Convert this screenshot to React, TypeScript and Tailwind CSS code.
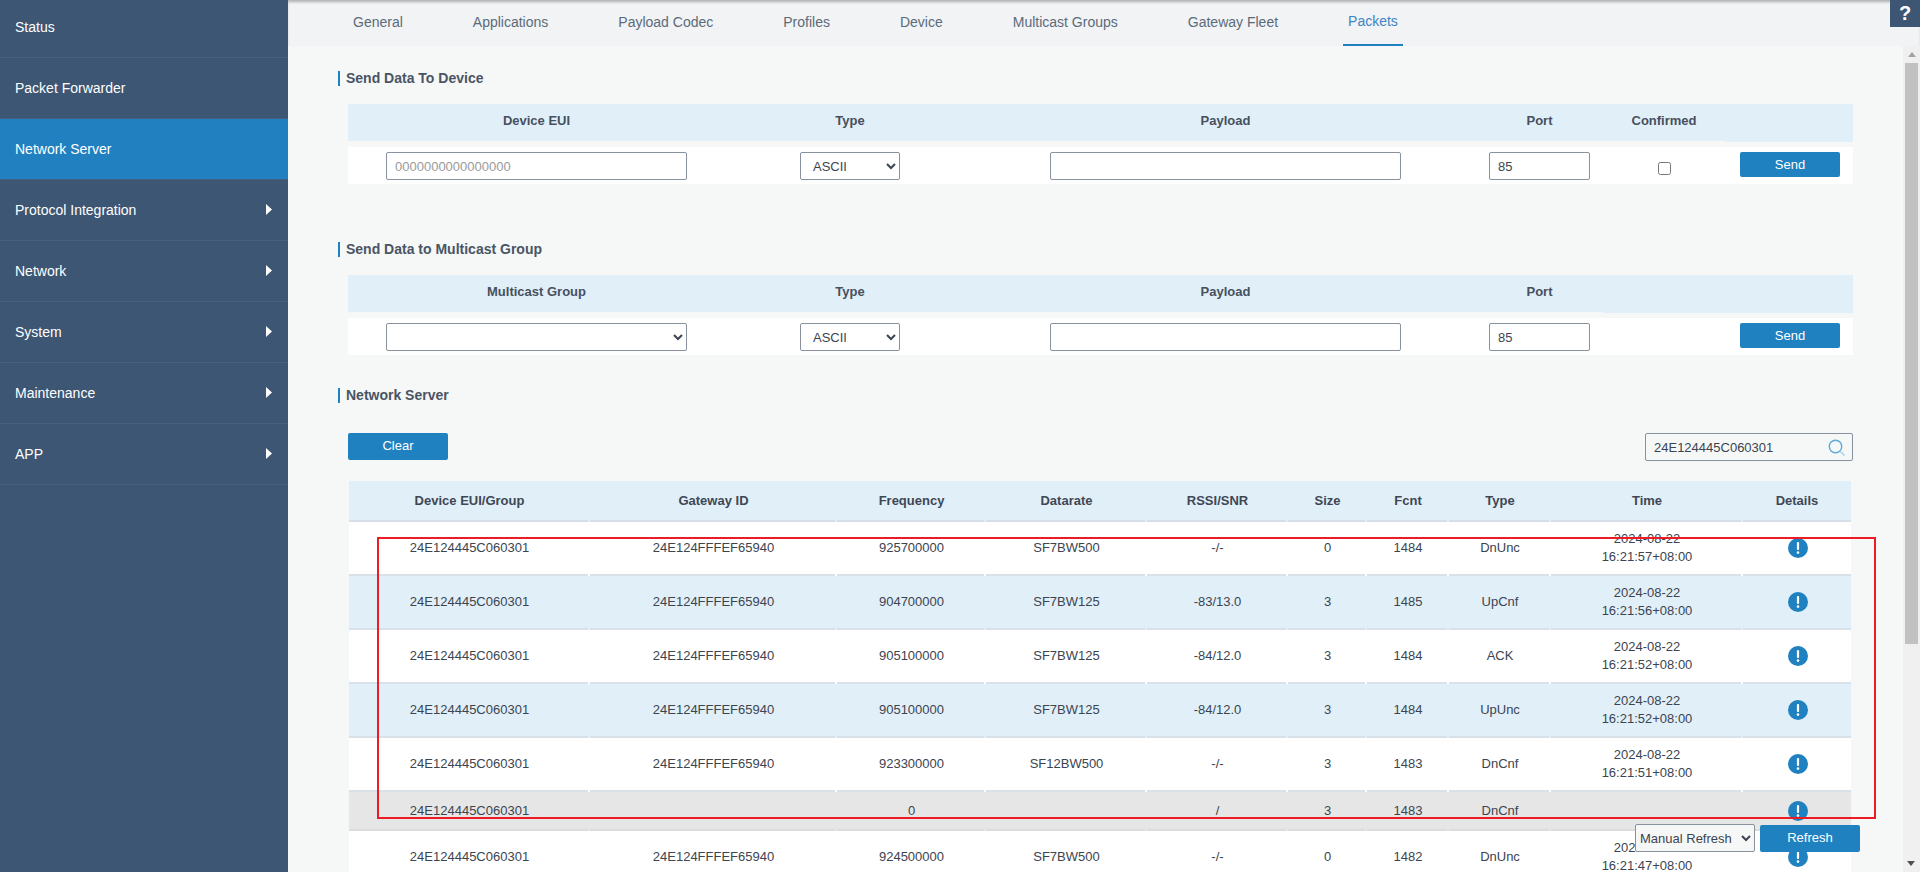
import React from "react";

const menu = [
  { label: "Packet Forwarder" },
  { label: "Network Server", active: true },
  { label: "Protocol Integration", arrow: true },
  { label: "Network", arrow: true },
  { label: "System", arrow: true },
  { label: "Maintenance", arrow: true },
  { label: "APP", arrow: true },
];

const tabs = ["General", "Applications", "Payload Codec", "Profiles", "Device", "Multicast Groups", "Gateway Fleet", "Packets"];

const heads = ["Device EUI/Group", "Gateway ID", "Frequency", "Datarate", "RSSI/SNR", "Size", "Fcnt", "Type", "Time", "Details"];

const EUI = "24E124445C060301";
const GW = "24E124FFFEF65940";

const rows = [
  { c: [EUI, GW, "925700000", "SF7BW500", "-/-", "0", "1484", "DnUnc"], t: "16:21:57+08:00", kind: "white" },
  { c: [EUI, GW, "904700000", "SF7BW125", "-83/13.0", "3", "1485", "UpCnf"], t: "16:21:56+08:00", kind: "blue" },
  { c: [EUI, GW, "905100000", "SF7BW125", "-84/12.0", "3", "1484", "ACK"], t: "16:21:52+08:00", kind: "white" },
  { c: [EUI, GW, "905100000", "SF7BW125", "-84/12.0", "3", "1484", "UpUnc"], t: "16:21:52+08:00", kind: "blue" },
  { c: [EUI, GW, "923300000", "SF12BW500", "-/-", "3", "1483", "DnCnf"], t: "16:21:51+08:00", kind: "white" },
  { c: [EUI, "", "0", "", "/", "3", "1483", "DnCnf"], t: "", kind: "gray" },
  { c: [EUI, GW, "924500000", "SF7BW500", "-/-", "0", "1482", "DnUnc"], t: "16:21:47+08:00", kind: "white" },
];

const dataCols = "grid grid-cols-[241px_247px_149px_161px_141px_79px_82px_102px_192px_108px]";
const formCols = "grid grid-cols-[377px_250px_501px_127px_122px_128px]";
const field = "h-[28px] border border-[#87929e] rounded-[2px] text-[13px] text-[#3c4450] outline-none";

function Title({ children }: { children: React.ReactNode }) {
  return (
    <div className="h-[15px] border-l-2 border-[#2081c0] pl-[6px] flex items-center text-[14px] font-bold text-[#4a5564]">
      {children}
    </div>
  );
}

function HeadCell({ children, tall }: { children?: React.ReactNode; tall?: boolean }) {
  return (
    <div className={`${tall ? "h-[38px]" : "h-[37px]"} bg-[#e1eff9] flex items-center justify-center pb-[4px] text-[13px] font-bold text-[#47505e]`}>
      {children}
    </div>
  );
}

function BodyCell({ children, pt }: { children?: React.ReactNode; pt?: boolean }) {
  return <div className={`h-[37px] bg-white flex justify-center ${pt ? "pt-[15px]" : "pt-[5px]"}`}>{children}</div>;
}

function SendBtn() {
  return (
    <button className="h-[25px] w-[100px] ml-[2px] rounded-[2px] bg-[#2081c0] text-[13px] text-white">Send</button>
  );
}

function InfoIcon() {
  return (
    <svg width="20" height="20" viewBox="0 0 20 20" className="block ml-[2px]">
      <circle cx="10" cy="10" r="10" fill="#2081c0" />
      <rect x="8.9" y="4" width="2.2" height="8" rx="1" fill="#fff" />
      <circle cx="10" cy="14.6" r="1.3" fill="#fff" />
    </svg>
  );
}

export default function App() {
  return (
    <div className="relative flex h-screen overflow-hidden font-['Liberation_Sans',Arial,sans-serif] text-[#3c4450] bg-[#f6f8f8]">
      <aside className="w-[288px] shrink-0 bg-[#3c5673] text-white text-[14px]">
        <div className="h-[58px] border-b border-[#46617f] flex items-center pl-[15px] pb-[3px]">Status</div>
        {menu.map((m) => (
          <div
            key={m.label}
            className={`h-[61px] border-b border-[#46617f] flex items-center justify-between pl-[15px] pr-[16px] ${m.active ? "bg-[#2181c0]" : ""}`}
          >
            <span>{m.label}</span>
            {m.arrow && (
              <svg width="6" height="11" viewBox="0 0 6 11" className="mb-[2px]">
                <path d="M0 0 L6 5.5 L0 11 Z" fill="#fff" />
              </svg>
            )}
          </div>
        ))}
      </aside>

      <div className="flex-1 min-w-0 flex flex-col">
        <nav className="h-[46px] shrink-0 bg-[#f1f3f5] shadow-[inset_0_3px_3px_-1px_rgba(0,0,0,0.28)] flex pl-[30px] text-[14px] text-[#5c6b7a]">
          {tabs.map((t) => (
            <div
              key={t}
              className={`mx-[30px] px-[5px] h-full flex items-center pb-[2px] ${t === "Packets" ? "border-b-2 border-[#2081c0] text-[#3f84c4]" : ""}`}
            >
              {t}
            </div>
          ))}
        </nav>

        <div className="flex-1 min-h-0 flex">
          <main className="flex-1 min-w-0 pt-[25px] pl-[50px] overflow-hidden">
            <Title>Send Data To Device</Title>
            <div className="mt-[18px] ml-[10px] w-[1505px]">
              <div className={`${formCols} items-start mb-[5px]`}>
                <HeadCell>Device EUI</HeadCell>
                <HeadCell>Type</HeadCell>
                <HeadCell>Payload</HeadCell>
                <HeadCell>Port</HeadCell>
                <HeadCell>Confirmed</HeadCell>
                <HeadCell tall />
              </div>
              <div className={formCols}>
                <BodyCell>
                  <input readOnly placeholder="0000000000000000" className={`${field} w-[301px] pl-[8px] bg-white placeholder:text-[#9a9a9a]`} />
                </BodyCell>
                <BodyCell>
                  <select defaultValue="ASCII" className={`${field} w-[100px] pl-[8px] bg-white`}>
                    <option>ASCII</option>
                  </select>
                </BodyCell>
                <BodyCell>
                  <input readOnly className={`${field} w-[351px] bg-white`} />
                </BodyCell>
                <BodyCell>
                  <input readOnly defaultValue="85" className={`${field} w-[101px] pl-[8px] bg-white`} />
                </BodyCell>
                <BodyCell pt>
                  <input type="checkbox" readOnly className="w-[13px] h-[13px] m-0" />
                </BodyCell>
                <BodyCell>
                  <SendBtn />
                </BodyCell>
              </div>
            </div>

            <div className="mt-[58px]">
              <Title>Send Data to Multicast Group</Title>
            </div>
            <div className="mt-[18px] ml-[10px] w-[1505px]">
              <div className="grid grid-cols-[377px_250px_501px_127px_250px] items-start mb-[5px]">
                <HeadCell>Multicast Group</HeadCell>
                <HeadCell>Type</HeadCell>
                <HeadCell>Payload</HeadCell>
                <HeadCell>Port</HeadCell>
                <HeadCell tall />
              </div>
              <div className={formCols}>
                <BodyCell>
                  <select className={`${field} w-[301px] bg-white`}>
                    <option></option>
                  </select>
                </BodyCell>
                <BodyCell>
                  <select defaultValue="ASCII" className={`${field} w-[100px] pl-[8px] bg-white`}>
                    <option>ASCII</option>
                  </select>
                </BodyCell>
                <BodyCell>
                  <input readOnly className={`${field} w-[351px] bg-white`} />
                </BodyCell>
                <BodyCell>
                  <input readOnly defaultValue="85" className={`${field} w-[101px] pl-[8px] bg-white`} />
                </BodyCell>
                <BodyCell />
                <BodyCell>
                  <SendBtn />
                </BodyCell>
              </div>
            </div>

            <div className="mt-[33px]">
              <Title>Network Server</Title>
            </div>

            <div className="mt-[30px] ml-[10px] w-[1505px] flex items-start justify-between">
              <button className="h-[27px] w-[100px] rounded-[2px] bg-[#2081c0] text-[13px] text-white pb-[1px]">Clear</button>
              <div className="relative">
                <input
                  readOnly
                  defaultValue={EUI}
                  className="h-[28px] w-[208px] border border-[#87929e] rounded-[2px] bg-transparent pl-[8px] text-[13px] text-[#3c4450] outline-none"
                />
                <svg width="18" height="18" viewBox="0 0 18 18" className="absolute right-[7px] top-[6px]" fill="none">
                  <circle cx="7.5" cy="7.5" r="6.2" stroke="#5aa9d6" strokeWidth="1.4" />
                  <path d="M12 12 L16.5 16.5" stroke="#a9d3ea" strokeWidth="1.6" />
                </svg>
              </div>
            </div>

            <div className="mt-[20px] ml-[11px] w-[1502px]">
              <div className={`${dataCols} h-[41px] bg-[#e1eff9]`}>
                {heads.map((h, i) => (
                  <div key={h} className="flex flex-col">
                    <div className="flex-1 flex items-center justify-center text-[13px] font-bold text-[#3f4754]">{h}</div>
                    <div className={`h-[2px] bg-[#d6dfe7] ${i < heads.length - 1 ? "mr-[2px]" : ""}`} />
                  </div>
                ))}
              </div>
              {rows.map((r, ri) => {
                const gray = r.kind === "gray";
                const bg = gray ? "bg-[#e6e6e6]" : r.kind === "blue" ? "bg-[#e1eff9]" : "bg-white";
                const cells: React.ReactNode[] = [...r.c];
                cells.push(
                  r.t ? (
                    <div className="leading-[18px] text-center">
                      <div>2024-08-22</div>
                      <div>{r.t}</div>
                    </div>
                  ) : (
                    ""
                  ),
                );
                cells.push(<InfoIcon />);
                return (
                  <div key={ri} className={`${dataCols} ${gray ? "h-[39px]" : "h-[54px]"} ${bg}`}>
                    {cells.map((c, i) => (
                      <div key={i} className="flex flex-col">
                        <div className="flex-1 flex items-center justify-center text-[13px] text-[#3c4450]">{c}</div>
                        <div className={`h-[2px] ${gray ? "bg-[#dcdcdc]" : "bg-[#d9e1e8]"} ${i < cells.length - 1 ? "mr-[2px]" : ""}`} />
                      </div>
                    ))}
                  </div>
                );
              })}
            </div>
          </main>

          <div className="w-[17px] shrink-0 bg-[#f0f0f0] px-[2px]">
            <div className="h-[17px] flex items-center justify-center">
              <svg width="8" height="5" viewBox="0 0 8 5"><path d="M0 5 L4 0 L8 5 Z" fill="#a3a3a3" /></svg>
            </div>
            <div className="h-[581px] bg-[#c1c1c1]" />
          </div>
        </div>
      </div>

      {/* floating help tab */}
      <div className="absolute right-0 top-0 w-[30px] h-[27px] bg-[#3c5673] text-white text-[20px] font-bold flex items-center justify-center pb-[2px]">?</div>

      {/* floating refresh controls */}
      <div className="absolute left-[1635px] top-[824px] flex items-start gap-[5px]">
        <select defaultValue="Manual Refresh" className="w-[120px] h-[28px] border border-[#87929e] rounded-[2px] bg-[#f6f8f8] text-[13px] text-[#3c4450] outline-none">
          <option>Manual Refresh</option>
        </select>
        <button className="mt-px w-[100px] h-[27px] rounded-[2px] bg-[#2081c0] text-[13px] text-white pb-[1px]">Refresh</button>
      </div>
      <svg width="8" height="5" viewBox="0 0 8 5" className="absolute left-[1907px] top-[861px]"><path d="M0 0 L4 5 L8 0 Z" fill="#505050" /></svg>

      {/* red annotation frame */}
      <div className="absolute left-[377px] top-[537px] w-[1499px] h-[282px] border-2 border-[#ed1c24] pointer-events-none" />
    </div>
  );
}
